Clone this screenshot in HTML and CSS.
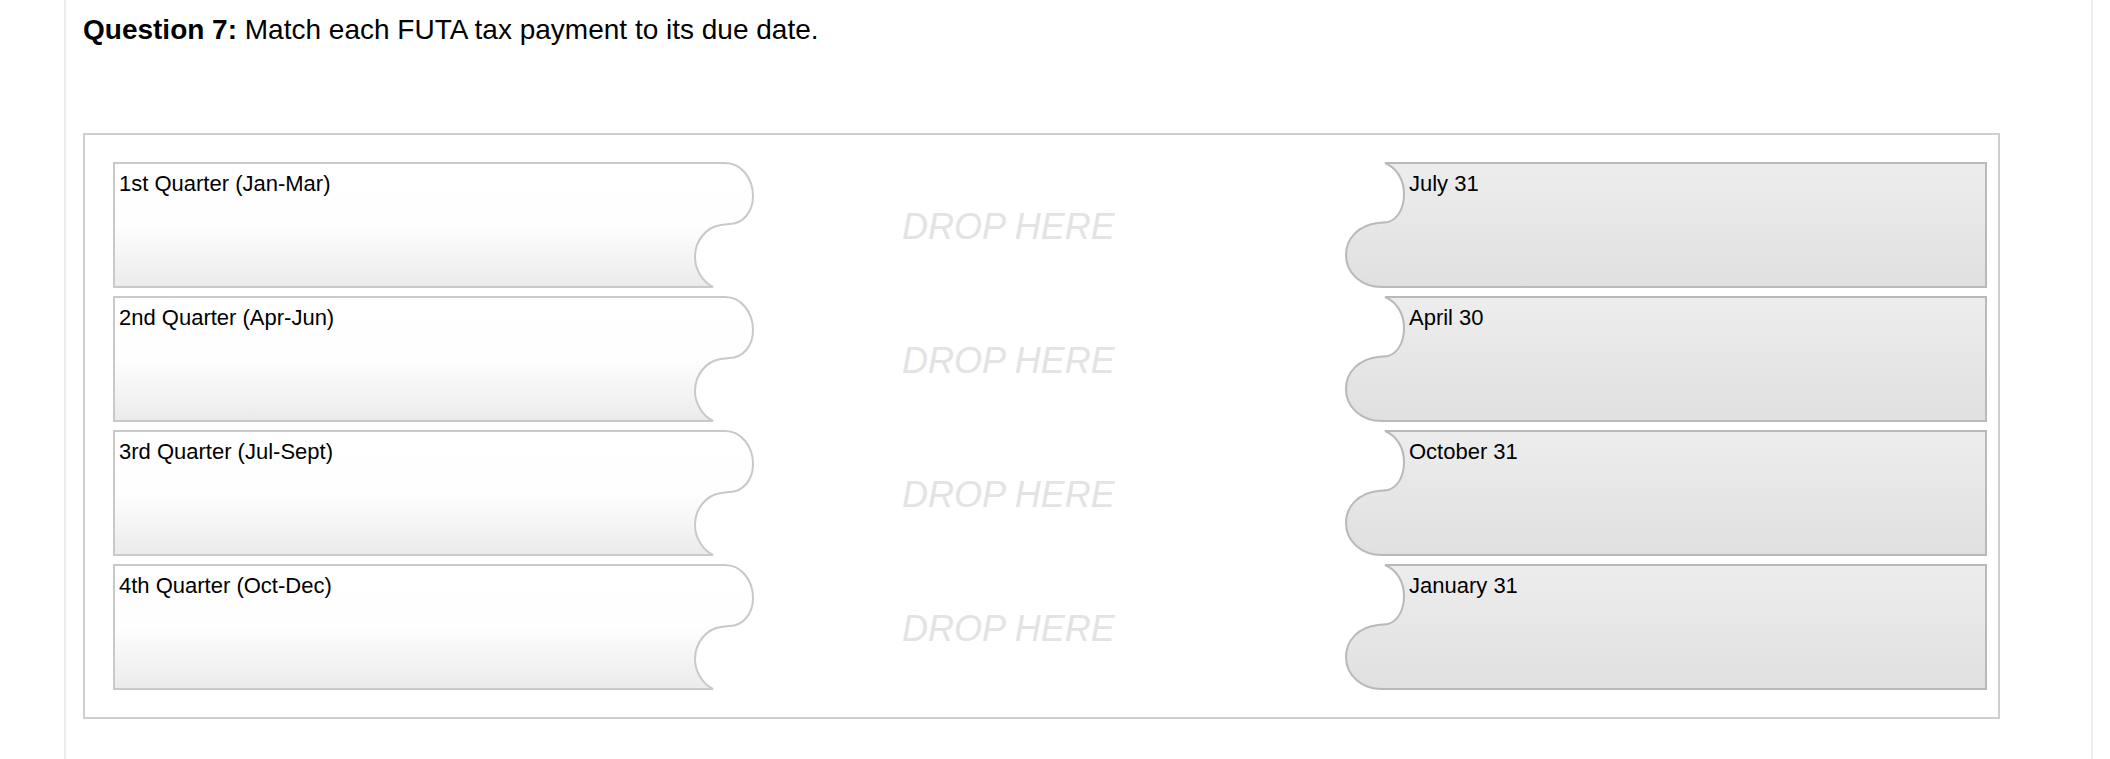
FILE: index.html
```html
<!DOCTYPE html>
<html lang="en">
<head>
<meta charset="utf-8">
<title>Question 7</title>
<link rel="stylesheet" href="styles.css">
</head>
<body>
<svg class="defs" width="0" height="0" aria-hidden="true">
  <defs>
    <linearGradient id="fillLeft" x1="0" y1="0" x2="0" y2="1">
      <stop offset="0" stop-color="#ffffff"/>
      <stop offset="0.5" stop-color="#fefefe"/>
      <stop offset="1" stop-color="#ebebeb"/>
    </linearGradient>
    <linearGradient id="fillRight" x1="0" y1="0" x2="0" y2="1">
      <stop offset="0" stop-color="#ededed"/>
      <stop offset="1" stop-color="#e0e0e0"/>
    </linearGradient>
  </defs>
</svg>
<main class="panel">
  <h1 class="question"><b>Question 7:</b> Match each FUTA tax payment to its due date.</h1>
  <div class="board">
    <div class="row">
      <div class="piece piece-left">
        <svg class="shape" viewBox="0 0 642 126" width="642" height="126"><path d="M1,1 H612 C628,1 640,16 640,34 C640,50 630,62 616,62 L608,63 C593,65 582,79 582,95 C582,108 590,120 600,125 H1 Z"/></svg>
        <span class="label">1st Quarter (Jan-Mar)</span>
      </div>
      <div class="drop">DROP HERE</div>
      <div class="piece piece-right">
        <svg class="shape" viewBox="0 0 642 126" width="642" height="126"><path d="M40,1 H641 V125 H37 C16,125 1,111 1,93 C1,76 14,63 33,61 L43,60 C53,57 59,46 59,32 C59,18 52,6 40,1 Z"/></svg>
        <span class="label">July 31</span>
      </div>
    </div>
    <div class="row">
      <div class="piece piece-left">
        <svg class="shape" viewBox="0 0 642 126" width="642" height="126"><path d="M1,1 H612 C628,1 640,16 640,34 C640,50 630,62 616,62 L608,63 C593,65 582,79 582,95 C582,108 590,120 600,125 H1 Z"/></svg>
        <span class="label">2nd Quarter (Apr-Jun)</span>
      </div>
      <div class="drop">DROP HERE</div>
      <div class="piece piece-right">
        <svg class="shape" viewBox="0 0 642 126" width="642" height="126"><path d="M40,1 H641 V125 H37 C16,125 1,111 1,93 C1,76 14,63 33,61 L43,60 C53,57 59,46 59,32 C59,18 52,6 40,1 Z"/></svg>
        <span class="label">April 30</span>
      </div>
    </div>
    <div class="row">
      <div class="piece piece-left">
        <svg class="shape" viewBox="0 0 642 126" width="642" height="126"><path d="M1,1 H612 C628,1 640,16 640,34 C640,50 630,62 616,62 L608,63 C593,65 582,79 582,95 C582,108 590,120 600,125 H1 Z"/></svg>
        <span class="label">3rd Quarter (Jul-Sept)</span>
      </div>
      <div class="drop">DROP HERE</div>
      <div class="piece piece-right">
        <svg class="shape" viewBox="0 0 642 126" width="642" height="126"><path d="M40,1 H641 V125 H37 C16,125 1,111 1,93 C1,76 14,63 33,61 L43,60 C53,57 59,46 59,32 C59,18 52,6 40,1 Z"/></svg>
        <span class="label">October 31</span>
      </div>
    </div>
    <div class="row">
      <div class="piece piece-left">
        <svg class="shape" viewBox="0 0 642 126" width="642" height="126"><path d="M1,1 H612 C628,1 640,16 640,34 C640,50 630,62 616,62 L608,63 C593,65 582,79 582,95 C582,108 590,120 600,125 H1 Z"/></svg>
        <span class="label">4th Quarter (Oct-Dec)</span>
      </div>
      <div class="drop">DROP HERE</div>
      <div class="piece piece-right">
        <svg class="shape" viewBox="0 0 642 126" width="642" height="126"><path d="M40,1 H641 V125 H37 C16,125 1,111 1,93 C1,76 14,63 33,61 L43,60 C53,57 59,46 59,32 C59,18 52,6 40,1 Z"/></svg>
        <span class="label">January 31</span>
      </div>
    </div>
  </div>
</main>
</body>
</html>
```

FILE: styles.css
```css
html, body {
  margin: 0;
  padding: 0;
  background: #ffffff;
}

body {
  font-family: "Liberation Sans", Arial, Helvetica, sans-serif;
  color: #000;
}

.defs {
  position: absolute;
  width: 0;
  height: 0;
  overflow: hidden;
}

.panel {
  box-sizing: border-box;
  margin-left: 64px;
  width: 2029px;
  min-height: 100vh;
  border-left: 2px solid #ededed;
  border-right: 2px solid #ededed;
  padding: 14px 0 0 17px;
}

.question {
  margin: 0;
  font-size: 28px;
  line-height: 32px;
  font-weight: normal;
}

.question b {
  font-weight: bold;
}

.board {
  box-sizing: border-box;
  margin-top: 87px;
  width: 1917px;
  border: 2px solid #cfcfcf;
  padding: 27px 11px 27px 28px;
  display: flex;
  flex-direction: column;
  gap: 8px;
}

.row {
  display: grid;
  grid-template-columns: 642px 1fr 642px;
  height: 126px;
}

.piece {
  position: relative;
  height: 126px;
}

.shape {
  position: absolute;
  left: 0;
  top: 0;
  display: block;
}

.piece-left .shape path {
  fill: url(#fillLeft);
  stroke: #c9c9c9;
  stroke-width: 2;
}

.piece-right .shape path {
  fill: url(#fillRight);
  stroke: #b9b9b9;
  stroke-width: 2;
}

.label {
  position: relative;
  display: block;
  font-size: 22px;
  line-height: 25px;
  padding-top: 9px;
}

.piece-left .label {
  padding-left: 6px;
}

.piece-right .label {
  padding-left: 64px;
}

.drop {
  font-size: 36px;
  line-height: 40px;
  font-style: italic;
  color: #e3e3e3;
  padding-top: 45px;
  padding-left: 147px;
  white-space: nowrap;
}
```
